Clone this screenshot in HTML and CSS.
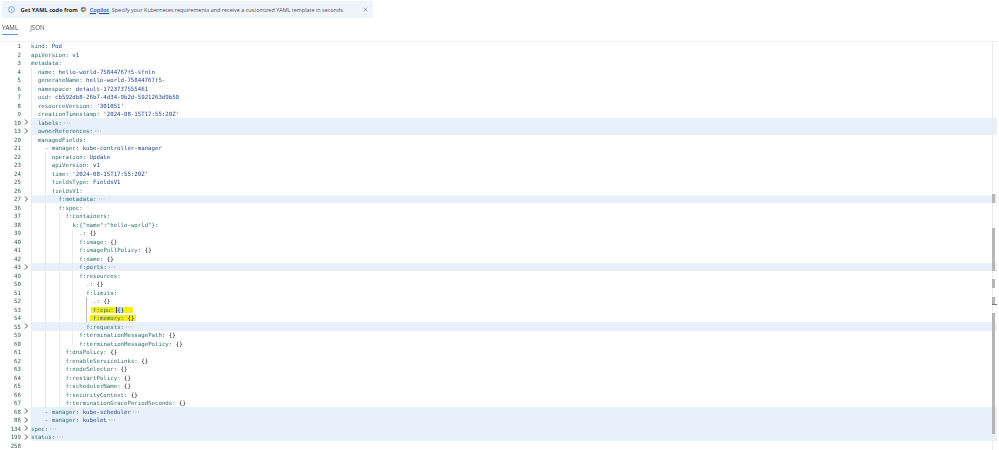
FILE: index.html
```html
<!DOCTYPE html>
<html lang="en">
<head>
<meta charset="utf-8">
<title>YAML</title>
<link rel="stylesheet" href="styles.css">
</head>
<body>
<div class="page">
<div class="banner">
  <svg class="info" viewBox="0 0 10 10"><circle cx="5" cy="5" r="4.2"/><path d="M5 4.5v2.4M5 3v.7"/></svg>
  <b>Get YAML code from</b>
  <svg class="copilot" viewBox="0 0 10 10"><path class="c1" d="M1 5a4 4 0 0 1 4-4l1 2-3 2z"/><path class="c2" d="M5 1a4 4 0 0 1 4 4H6L4 3z"/><path class="c3" d="M9 5a4 4 0 0 1-4 4L4 7l3-2z"/><path class="c4" d="M5 9a4 4 0 0 1-4-4h3l2 2z"/></svg>
  <a href="#">Copilot</a><span class="after">. Specify your Kubernetes requirements and receive a customized YAML template in seconds.</span>
  <svg class="close" viewBox="0 0 6 6"><path d="M.8.8l4.4 4.4M5.2.8L.8 5.2"/></svg>
</div>
<div class="tabs"><span class="tab active">YAML</span><span class="tab">JSON</span></div>
<div class="editor" id="editor"></div>
</div>
<script src="app.js"></script>
</body>
</html>
```
FILE: styles.css
```css
html,body{margin:0;padding:0;background:#fff;overflow:hidden}
body{width:999px;height:450px;font-family:"Open Sans","Liberation Sans",sans-serif;color:#323130}
.page{filter:blur(.3px);height:450px}
.banner{margin:1px 0 0 2px;width:371px;height:17px;background:#eff4fb;display:flex;align-items:center;font-size:5.45px;white-space:nowrap;padding-left:6px;box-sizing:border-box}
.banner b{font-weight:700;font-size:5.65px;margin-left:5.5px;color:#2b2a29}
.info{width:7px;height:7px;fill:none;stroke:#3b6fd4;stroke-width:.8}
.copilot{width:7px;height:7px;margin:0 2.5px}
.c1{fill:#3d8fe0}.c2{fill:#d86a9a}.c3{fill:#e8a13a}.c4{fill:#4fb06a}
.banner a{color:#1c4f9c;font-weight:600;font-size:5.6px;text-decoration:underline}
.after{color:#52504e}
.close{width:5px;height:5px;margin-left:auto;margin-right:5px;fill:none;stroke:#8a8a8a;stroke-width:.7}
.tabs{display:flex;gap:12px;margin:4px 0 0 2px;height:13px;font-size:6.2px}
.tab{line-height:11px;height:12px;color:#555}
.tab.active{color:#333;border-bottom:1px solid #6b9bd8;font-weight:500}
.editor{margin-top:5.5px;border-top:1px solid #f0f0f0;position:relative;height:410px;font:5.73px/8.5px "DejaVu Sans Mono",monospace}
.row{display:flex;height:8.5px;white-space:pre;margin-right:2px}
.num{width:21px;text-align:right;color:#2f5a60;flex:none;padding-top:.6px}
.chev{width:10px;flex:none;display:flex;align-items:center;justify-content:center}
.chev svg{width:4px;height:6px;fill:none;stroke:#444;stroke-width:.9}
.code{flex:1;display:flex;color:#1f4690;min-width:0}
.fold .code{background:#e8f0fc}
.k{color:#2f6f72}
.b{color:#1c1c1c}
.e{color:#9a9a9a;letter-spacing:-1px;margin-left:1px}
.g{width:13.8px;height:100%;flex:none;box-sizing:border-box;border-left:1px solid #ececec}
.g.half{width:6.9px}
.g.dk{border-left-color:#b8b8b8}
.line{display:inline-block;padding-top:.6px}
.hl{background:linear-gradient(#f8ee14,#f8ee14) 0 50%/100% 6px no-repeat;margin-left:-2.5px;padding:0 6px 0 2.5px}
.hl.w{margin-left:-3.5px;padding:0 2px 0 3.5px}
.hl.c{padding-right:9px}
.cur{background:#c9dff2;box-shadow:-1px 0 0 #444}
.scroll{position:absolute;top:0;left:992px;width:1px;height:408px;background:#ececec}
.mark{position:absolute;left:992px;width:3px;background:#b5b5b5}
.tick{position:absolute;left:992px;top:262px;width:5px;height:1px;background:#777}
```
FILE: app.js
```js
var rows=[
[1,0,0,"kind: |Pod"],[2,0,0,"apiVersion: |v1"],[3,0,0,"metadata:"],
[4,2,0,"name: |hello-world-75844767f5-sfnln"],[5,2,0,"generateName: |hello-world-75844767f5-"],
[6,2,0,"namespace: |default-1723737555461"],[7,2,0,"uid: |cb592db8-26b7-4d34-9b2d-5921263d9b50"],
[8,2,0,"resourceVersion: |'301051'"],[9,2,0,"creationTimestamp: |'2024-08-15T17:55:20Z'"],
[10,2,1,"labels:"],[13,2,1,"ownerReferences:"],[20,2,0,"managedFields:"],
[21,4,0,"- manager: |kube-controller-manager"],[22,6,0,"operation: |Update"],[23,6,0,"apiVersion: |v1"],
[24,6,0,"time: |'2024-08-15T17:55:20Z'"],[25,6,0,"fieldsType: |FieldsV1"],[26,6,0,"fieldsV1:"],
[27,8,1,"f:metadata:"],[36,8,0,"f:spec:"],[37,10,0,"f:containers:"],[38,12,0,"k:{\"name\":\"hello-world\"}:"],
[39,14,0,".: |{}"],[40,14,0,"f:image: |{}"],[41,14,0,"f:imagePullPolicy: |{}"],[42,14,0,"f:name: |{}"],
[43,14,1,"f:ports:"],[49,14,0,"f:resources:"],[50,16,0,".: |{}"],[51,16,0,"f:limits:"],[52,18,0,".: |{}"],
[53,18,0,"f:cpu: |{}",'cur'],[54,18,0,"f:memory: |{}",'hl'],[55,16,1,"f:requests:"],
[59,14,0,"f:terminationMessagePath: |{}"],[60,14,0,"f:terminationMessagePolicy: |{}"],
[61,10,0,"f:dnsPolicy: |{}"],[62,10,0,"f:enableServiceLinks: |{}"],[63,10,0,"f:nodeSelector: |{}"],
[64,10,0,"f:restartPolicy: |{}"],[65,10,0,"f:schedulerName: |{}"],[66,10,0,"f:securityContext: |{}"],
[67,10,0,"f:terminationGracePeriodSeconds: |{}"],
[68,4,1,"- manager: |kube-scheduler"],[86,4,1,"- manager: |kubelet"],[134,0,1,"spec:"],[199,0,1,"status:"],[258,0,0,""]];
var ed=document.getElementById('editor'),h='';
function esc(s){return s.replace(/</g,'&lt;');}
rows.forEach(function(r){
  var parts=r[3].split('|'),col=r[1],n=Math.ceil(col/4),g='';
  for(var i=0;i<n;i++){
    var last=i==n-1&&col%4;
    g+='<i class="g'+(last?' half':'')+(col==18&&last?' dk':'')+'"></i>';
  }
  var key='<span class="k">'+esc(parts[0])+'</span>';
  var val=parts[1]||'';
  var vc=val=='{}'?'b':'v';
  var inner;
  if(r[4]=='cur'){inner='<span class="hl c">'+key+'<span class="cur b">{}</span></span>';}
  else if(r[4]=='hl'){inner='<span class="hl w">'+key+'<span class="b">{}</span></span>';}
  else{inner=key+'<span class="'+vc+'">'+esc(val)+'</span>'+(r[2]?'<span class="e">···</span>':'');}
  h+='<div class="row'+(r[2]?' fold':'')+'"><span class="num">'+r[0]+'</span><span class="chev">'+(r[2]?'<svg viewBox="0 0 4 6"><path d="M1 .5l2.5 2.5-2.5 2.5"/></svg>':'')+'</span><span class="code">'+g+'<span class="line">'+inner+'</span></span></div>';
});
h+='<div class="scroll"></div>';
[[152.5,9],[186.5,43],[237.5,9],[255.5,8],[271.5,121]].forEach(function(m){h+='<div class="mark" style="top:'+m[0]+'px;height:'+m[1]+'px"></div>';});
h+='<div class="tick"></div>';
ed.innerHTML=h;
```
